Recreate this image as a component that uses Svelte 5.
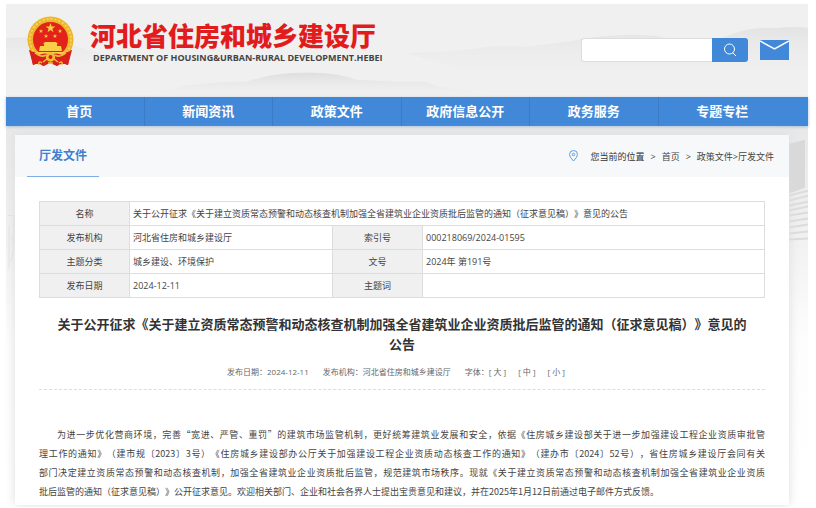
<script>
  let keyword = $state("");
  let fontSize = $state("medium");

  const navItems = ["首页", "新闻资讯", "政策文件", "政府信息公开", "政务服务", "专题专栏"];

  const sizes = [
    { key: "large", label: "大" },
    { key: "medium", label: "中" },
    { key: "small", label: "小" },
  ];

  const title =
    "关于公开征求《关于建立资质常态预警和动态核查机制加强全省建筑业企业资质批后监管的通知（征求意见稿）》意见的公告";

  const rows = [
    ["发布机构", "河北省住房和城乡建设厅", "索引号", "000218069/2024-01595"],
    ["主题分类", "城乡建设、环境保护", "文号", "2024年 第191号"],
    ["发布日期", "2024-12-11", "主题词", ""],
  ];

  const lines = [
    "为进一步优化营商环境，完善“宽进、严管、重罚”的建筑市场监管机制，更好统筹建筑业发展和安全，依据《住房城乡建设部关于进一步加强建设工程企业资质审批管",
    "理工作的通知》（建市规〔2023〕3号）《住房城乡建设部办公厅关于加强建设工程企业资质动态核查工作的通知》（建办市〔2024〕52号），省住房城乡建设厅会同有关",
    "部门决定建立资质常态预警和动态核查机制，加强全省建筑业企业资质批后监管，规范建筑市场秩序。现就《关于建立资质常态预警和动态核查机制加强全省建筑业企业资质",
    "批后监管的通知（征求意见稿）》公开征求意见。欢迎相关部门、企业和社会各界人士提出宝贵意见和建议，并在2025年1月12日前通过电子邮件方式反馈。",
  ];
</script>

<div class="page" lang="zh-CN">
  <!-- ink-wash hills behind the header, buildings down the sides -->
  <svg class="scenery" viewBox="0 0 802 502" preserveAspectRatio="none" aria-hidden="true">
    <defs>
      <linearGradient id="hill" x1="0" y1="0" x2="0" y2="1">
        <stop offset="0" stop-color="#dedede" />
        <stop offset="1" stop-color="#efefef" stop-opacity="0" />
      </linearGradient>
      <linearGradient id="fade" x1="0" y1="0" x2="0" y2="1">
        <stop offset="0" stop-color="#e6e6e6" />
        <stop offset="0.300" stop-color="#efefef" />
        <stop offset="0.600" stop-color="#fdfdfd" />
        <stop offset="1" stop-color="#ffffff" />
      </linearGradient>
    </defs>
    <rect y="93" width="802" height="409" fill="url(#fade)" />
    <path fill="url(#hill)" opacity=".5" d="M0 34 Q30 32 60 40 T120 56 L180 70 H0Z" />
    <path fill="url(#hill)" d="M140 92 L180 82 Q215 77 240 78 Q270 68 300 69 Q330 68 350 76 Q385 78 402 78 Q418 76 430 82 L500 94 Z" />
    <path fill="url(#hill)" opacity=".7" d="M400 49 Q450 48 480 43 Q500 41 520 43 Q550 39 565 37 Q610 28 650 32 Q690 40 712 36 Q740 22 770 24 Q790 22 802 24 V80 H500 Z" />
    <path fill="#d9d9d9" d="M783 140 L799 136 V184 L783 190Z" />
    <g fill="none" stroke="#dcdcdc" stroke-width="2">
      <path d="M783 192 L802 187 M783 197 L802 192 M783 202 L802 198 M783 207 L802 203 M783 212 L802 209 M783 218 L802 215 M783 224 L802 221 M783 230 L802 228 M783 236 L802 235" />
      <path stroke="#e3e3e3" stroke-width="1" d="M2 212 H8 V240 M3 222 V265 M6 232 Q9 245 5 258" />
    </g>
  </svg>

  <header>
    <svg class="emblem" viewBox="0 0 47 50" role="img" aria-label="国徽">
      <path fill="#d8211b" d="M2 34 H45 L41 49 Q34 46 30 50 L23 47 L16 50 Q12 46 6 49Z" />
      <circle cx="23.500" cy="23.500" r="23" fill="#edb62b" />
      <circle cx="23.500" cy="23.500" r="20.500" fill="none" stroke="#f8d15a" stroke-width="2" stroke-dasharray="2 2" />
      <circle cx="23.500" cy="23.500" r="17.500" fill="#e32219" />
      <path fill="#f9cf48" d="M23.500 7 l1.200 3.500 h3.700 l-3 2.200 1.100 3.600 -3-2.200 -3 2.200 1.100-3.600 -3-2.200 h3.700z" />
      <g fill="#f9cf48">
        <path id="star" d="M14 13 l.6 1.500 h1.600 l-1.300 1 .5 1.600 -1.400-1 -1.400 1 .5-1.600 -1.300-1 h1.600z" />
        <use href="#star" x="5" y="5" />
        <use href="#star" x="14" y="5" />
        <use href="#star" x="19" />
        <path d="M18 26 H29 L31 28 H16Z M17 28 H30 V30 H17Z M13 30 H34 L35 35 H12Z M7 36 H40 L38 39 H9Z" />
      </g>
      <path fill="#d8211b" d="M3 35 Q9 36 12 39 Q18 36 23.500 39 Q29 36 35 39 Q38 36 44 35 L41 49 Q34 46 30 50 L23.500 46 L17 50 Q12 46 6 49Z" />
      <g fill="none" stroke="#f4bd35" stroke-width="1.500">
        <path d="M8 37 Q14 42 19 39 M39 37 Q33 42 28 39 M15 47 Q11 44 12 49 M32 47 Q36 44 35 49" />
        <circle cx="23.500" cy="41" r="4" fill="#f4bd35" />
        <path d="M16 46 L20 43 M31 46 L27 43 M21 47 H26" />
      </g>
      <circle cx="23.500" cy="41" r="2" fill="#d8211b" />
    </svg>
    <div class="brand">
      <div class="name">河北省住房和城乡建设厅</div>
      <div class="english">DEPARTMENT OF HOUSING&amp;URBAN-RURAL DEVELOPMENT.HEBEI</div>
    </div>
    <form class="search" onsubmit={(e) => e.preventDefault()}>
      <input type="text" aria-label="搜索" bind:value={keyword} />
      <button type="submit" aria-label="搜索">
        <svg width="14" height="14" viewBox="0 0 14 14" fill="none" stroke="#fff">
          <circle cx="6.500" cy="6" r="5" />
          <path d="M10 10 L13 13" />
        </svg>
      </button>
    </form>
    <a class="mail" href="#mail" aria-label="邮箱">
      <svg width="29" height="20" viewBox="0 0 29 20">
        <rect width="29" height="20" fill="#4288d9" />
        <path d="M0 1 L14.500 9 L29 1" fill="none" stroke="#fff" stroke-width="1.500" />
      </svg>
    </a>
  </header>

  <nav>
    {#each navItems as item}
      <a href="#nav">{item}</a>
    {/each}
  </nav>

  <main>
    <div class="bar">
      <h2>厅发文件</h2>
      <div class="crumbs">
        <svg width="9" height="12" viewBox="0 0 9 12" fill="none" stroke="#5b9be2">
          <path d="M4.500 11 Q.5 7 .5 4.500 A4 4 0 0 1 8.500 4.500 Q8.500 7 4.500 11Z" />
          <circle cx="4.500" cy="4.500" r="1.200" />
        </svg>
        <strong>您当前的位置</strong>
        <span>&gt;</span>
        <a href="#home">首页</a>
        <span>&gt;</span>
        <div><a href="#policy">政策文件</a>&gt;<a href="#doc">厅发文件</a></div>
      </div>
    </div>

    <div class="content">
      <table>
        <colgroup>
          <col class="label" />
          <col class="value" />
          <col class="label" />
          <col />
        </colgroup>
        <tbody>
          <tr>
            <th scope="row">名称</th>
            <td colspan="3">{title}</td>
          </tr>
          {#each rows as row}
            <tr>
              <th scope="row">{row[0]}</th>
              <td>{row[1]}</td>
              <th scope="row">{row[2]}</th>
              <td>{row[3]}</td>
            </tr>
          {/each}
        </tbody>
      </table>

      <h1>{title}</h1>

      <div class="meta">
        <span>发布日期：2024-12-11</span>
        <span>发布机构：河北省住房和城乡建设厅</span>
        <div class="sizes">
          <span>字体：</span>
          {#each sizes as s}
            <button type="button" onclick={() => (fontSize = s.key)}>[ {s.label} ]</button>
          {/each}
        </div>
      </div>

      <p class={fontSize}>
        {#each lines as line}
          <span>{line}</span>
        {/each}
      </p>
    </div>
  </main>
</div>

<style>
  :global(body) {
    margin: 0;
    background: #fff;
  }

  .page {
    position: relative;
    margin: 4px 8px 2px 6px;
    background: #f0f0f0;
    color: #444;
    font-family: "Open Sans", "Noto Sans CJK SC", sans-serif;
    font-size: 9px;
    text-spacing-trim: space-all;
  }

  .scenery {
    position: absolute;
    inset: 0;
    width: 100%;
    height: 100%;
  }

  header,
  nav,
  main {
    position: relative;
  }

  a {
    color: inherit;
    text-decoration: none;
  }

  button {
    padding: 0;
    border: 0;
    background: none;
    color: inherit;
    font: inherit;
    cursor: pointer;
  }

  /* header */
  header {
    display: flex;
    align-items: center;
    box-sizing: border-box;
    height: 93px;
    padding: 0 19px 2px 21px;
  }

  .emblem {
    width: 47px;
    height: 50px;
    margin-bottom: 18px;
  }

  .brand {
    margin: 0 auto 16px 16px;
    white-space: nowrap;
  }

  .name {
    color: #e21c1c;
    font-size: 26px;
    font-weight: 900;
    line-height: 32px;
  }

  .english {
    padding-left: 3px;
    font-weight: 700;
    line-height: 12px;
  }

  .search {
    display: flex;
    height: 24px;
    margin-right: 12px;
  }

  .search input {
    box-sizing: border-box;
    width: 131px;
    padding: 0 8px;
    border: 1px solid #ddd;
    border-right: 0;
    border-radius: 3px 0 0 3px;
    outline: 0;
    background: #fff;
    font: inherit;
  }

  .search button {
    display: grid;
    place-items: center;
    width: 36px;
    border-radius: 0 3px 3px 0;
    background: #4288d9;
  }

  .mail svg {
    display: block;
  }

  /* nav */
  nav {
    display: grid;
    grid-template-columns: repeat(6, 1fr);
    padding: 0 22px 0 9px;
    background: #4288d9;
    box-shadow: 0 1px 3px #a9c0da;
  }

  nav a {
    color: #fff;
    font-size: 13px;
    font-weight: 700;
    line-height: 29px;
    text-align: center;
  }

  nav a + a {
    border-left: 1px solid #3a7bc8;
  }

  /* card */
  main {
    margin: 9px 19px 0 9px;
    background: #fff;
    box-shadow: 0 0 10px #ddd;
  }

  .bar {
    display: flex;
    align-items: stretch;
    justify-content: space-between;
    padding: 0 15px 0 12px;
    background: #f6f8fa;
  }

  h2 {
    margin: 0;
    padding: 0 12px;
    border-bottom: 1px solid #7fafe5;
    color: #3f7fd0;
    font-size: 12px;
    line-height: 41px;
  }

  .crumbs {
    display: flex;
    align-items: center;
    gap: 6px;
  }

  .crumbs svg {
    margin-right: 6px;
  }

  .crumbs strong {
    color: #333;
    font-weight: 400;
  }

  .content {
    padding: 24px 24px 4px;
  }

  table {
    width: 100%;
    border-collapse: collapse;
    table-layout: fixed;
  }

  .label {
    width: 90px;
  }

  .value {
    width: 203px;
  }

  th,
  td {
    height: 23px;
    padding: 0 3px;
    border: 1px solid #ddd;
    line-height: 16px;
    text-align: left;
  }

  th {
    background: #f0f0f0;
    font-weight: 400;
    text-align: center;
  }

  h1 {
    margin: 16px 0 0;
    padding: 0 16px;
    color: #333;
    font-size: 13px;
    line-height: 20px;
    text-align: center;
  }

  .meta {
    display: flex;
    justify-content: center;
    gap: 14px;
    padding: 9px 0 8px;
    border-bottom: 1px dashed #ddd;
    color: #666;
    font-size: 8px;
    line-height: 18px;
  }

  .sizes {
    display: flex;
  }

  .sizes button {
    margin-right: 12px;
  }

  /* the CJK face alone keeps the quotation marks full width */
  p {
    margin: 35px 0 0;
    font-family: "Noto Sans CJK SC", sans-serif;
    line-height: 19px;
    text-indent: 2em;
  }

  p span {
    display: block;
    text-align: justify;
    text-align-last: justify;
  }

  p span + span {
    text-indent: 0;
  }

  p span:last-child {
    text-align-last: left;
  }

  p.small {
    font-size: 8px;
  }

  p.large {
    font-size: 10px;
  }
</style>
